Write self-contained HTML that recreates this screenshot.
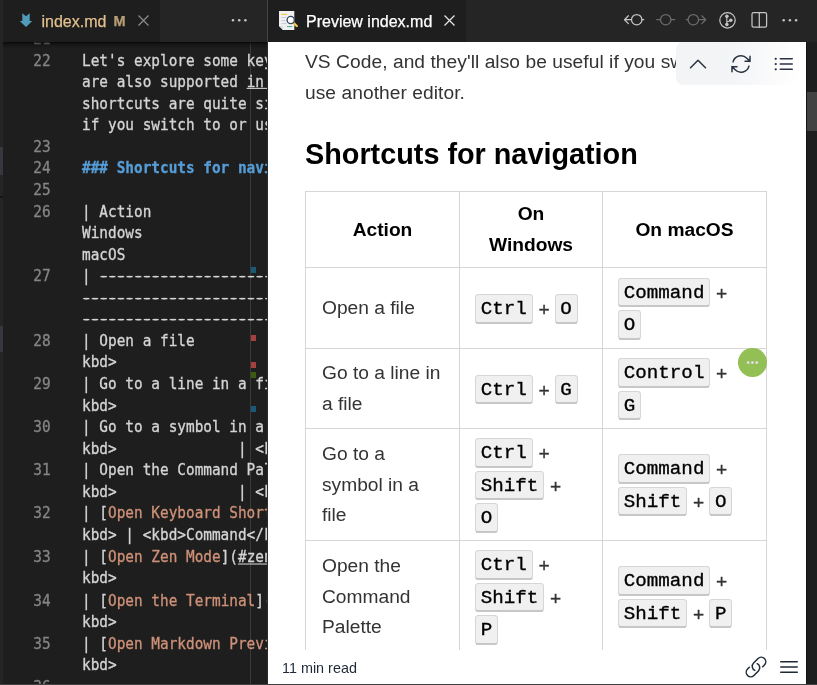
<!DOCTYPE html>
<html lang="en">
<head>
<meta charset="utf-8">
<title>index.md - Preview</title>
<style>
*{box-sizing:border-box;margin:0;padding:0}
html,body{width:817px;height:685px;overflow:hidden;background:#1e1e1e}
body{position:relative;font-family:"Liberation Sans",sans-serif;font-size:16px;color:#ccc}
.abs{position:absolute}
/* left strip */
#strip{left:0;top:0;width:3px;height:685px;background:#252526}
#strip i{position:absolute;left:0;width:3px;display:block}
/* tab bars */
.tabbar{top:0;height:42px;background:#252526}
.tab{position:absolute;top:0;height:42px;background:#1e1e1e}
.tab span{position:absolute;white-space:nowrap;line-height:42px;top:1px}
/* editor */
#editor{left:3px;top:42px;width:264px;height:642px;background:#1e1e1e;overflow:hidden;
 font-family:"DejaVu Sans Mono","Liberation Mono",monospace;font-size:14.4px;line-height:20.5714px;color:#d4d4d4}
#lines{position:absolute;left:0;top:-14.4px;width:400px;transform:scaleY(1.05);transform-origin:0 0}
.l{position:relative;height:20.5714px;white-space:pre}
.l b{position:absolute;left:0;width:47.6px;text-align:right;color:#858585;font-weight:normal}
.l s{position:absolute;left:79px;text-decoration:none}
.h{color:#569cd6;font-weight:bold}
.o{color:#ce9178}
.d{-webkit-text-stroke:0;text-shadow:1.3px 0 0 #d4d4d4,-1.3px 0 0 #d4d4d4}
.u{text-decoration:underline;text-underline-offset:1.2px;text-decoration-thickness:1px}
#shadow{left:0;top:0;width:264px;height:6px;background:linear-gradient(#000 0,rgba(0,0,0,.45) 30%,rgba(0,0,0,0) 100%);opacity:.75}
/* preview */
#pv{left:268px;top:42px;width:538px;height:642px;background:#fff;overflow:hidden;color:#333;
 font-size:19.2px;line-height:30.72px}
#md{position:absolute;left:37px;top:5.3px;width:480px}
#md p{margin:0 0 19.2px;white-space:nowrap;letter-spacing:.05px}
#md h3{font-size:28.8px;line-height:34.56px;margin:28.8px 0 19.2px;color:#000;font-weight:bold;white-space:nowrap}
table{border-collapse:collapse;border-spacing:0}
th,td{border:1px solid #d6d6d6;padding:0 15px;vertical-align:middle}
th{font-weight:bold;color:#000;text-align:center}
td.k{line-height:32.5px;white-space:nowrap}
td:first-child{padding:1px 15px 0 16px}
th{padding-top:1px}
kbd{font-family:"Liberation Mono",monospace;font-size:19.2px;line-height:1;color:#000;border:1px solid #d6d6d6;border-bottom:2px solid #c7c7c7;
 padding:3px 4.8px 1.5px;background:#f0f0f0;border-radius:3.6px;position:relative;top:.3px;-webkit-text-stroke:.35px}
td i{font-style:normal;position:relative;top:2.4px;left:.5px;-webkit-text-stroke:.3px}
#foot{left:0;top:608px;width:538px;height:34px;background:#fff}
#md,#lines,.tab,#foot{will-change:transform}
#lines{-webkit-text-stroke:.3px}
.tab span{-webkit-text-stroke:.25px}
</style>
</head>
<body>
<!-- left activity strip -->
<div id="strip" class="abs">
 <i style="top:147px;height:28px;background:#37373d"></i>
 <i style="top:196px;height:2px;background:#161616"></i>
 <i style="top:326px;height:26px;background:#37373d"></i>
</div>

<!-- left tab bar -->
<div class="abs tabbar" style="left:3px;width:264px">
 <div class="tab" style="left:0;width:157px">
  <svg class="abs" style="left:16px;top:12px" width="14" height="16" viewBox="0 0 14 16"><path d="M3.3 1.3 L7 4.2 L10.7 1.3 V9 H13.3 L7 15 L.7 9 H3.3 Z" fill="#519aba"/></svg>
  <span style="left:38.5px;color:#e2c08d">index.md</span>
  <span style="left:110.5px;top:-.5px;color:#b99f76;font-size:14.5px;font-weight:bold">M</span>
  <svg class="abs" style="left:134px;top:14px" width="13" height="13" viewBox="0 0 13 13"><path d="M1.5 1.5 L11.5 11.5 M11.5 1.5 L1.5 11.5" stroke="#8e8e8e" stroke-width="1.15" fill="none"/></svg>
 </div>
 <svg class="abs" style="left:227px;top:17px" width="18" height="6" viewBox="0 0 18 6"><circle cx="3" cy="3.3" r="1.25" fill="#c5c5c5"/><circle cx="9.2" cy="3.3" r="1.25" fill="#c5c5c5"/><circle cx="15.4" cy="3.3" r="1.25" fill="#c5c5c5"/></svg>
</div>

<!-- editor -->
<div id="editor" class="abs">
 <!-- overview ruler -->
 <div class="abs" style="left:247px;top:0;width:1px;height:642px;background:#3a3a3a"></div>
 <div class="abs" style="left:248px;top:225px;width:5px;height:6px;background:#1b5a77"></div>
 <div class="abs" style="left:248px;top:293px;width:5px;height:6px;background:#a64040"></div>
 <div class="abs" style="left:248px;top:320px;width:5px;height:6px;background:#a64040"></div>
 <div class="abs" style="left:248px;top:330px;width:5px;height:6px;background:#3d5c12"></div>
 <div class="abs" style="left:248px;top:364px;width:5px;height:6px;background:#1b5a77"></div>
 <div id="lines">
<div class="l"><b>21</b><s></s></div>
<div class="l"><b>22</b><s>Let's explore some keyboard</s></div>
<div class="l"><s>are also supported <span class="u">in VS</span></s></div>
<div class="l"><s>shortcuts are quite simple</s></div>
<div class="l"><s>if you switch to or use</s></div>
<div class="l"><b>23</b><s></s></div>
<div class="l"><b>24</b><s class="h">### Shortcuts for navigation</s></div>
<div class="l"><b>25</b><s></s></div>
<div class="l"><b>26</b><s>| Action</s></div>
<div class="l"><s>Windows</s></div>
<div class="l"><s>macOS</s></div>
<div class="l"><b>27</b><s>| <span class="d">----------------------</span></s></div>
<div class="l"><s class="d">------------------------</s></div>
<div class="l"><s class="d">------------------------</s></div>
<div class="l"><b>28</b><s>| Open a file</s></div>
<div class="l"><s>kbd&gt;</s></div>
<div class="l"><b>29</b><s>| Go to a line in a file</s></div>
<div class="l"><s>kbd&gt;</s></div>
<div class="l"><b>30</b><s>| Go to a symbol in a file</s></div>
<div class="l"><s>kbd&gt;              | &lt;kbd</s></div>
<div class="l"><b>31</b><s>| Open the Command Palette</s></div>
<div class="l"><s>kbd&gt;              | &lt;kbd</s></div>
<div class="l"><b>32</b><s>| [<span class="o">Open Keyboard Shortcuts</span></s></div>
<div class="l"><s>kbd&gt; | &lt;kbd&gt;Command&lt;/kbd</s></div>
<div class="l"><b>33</b><s>| [<span class="o">Open Zen Mode</span>](<span class="u">#zen-mode</span></s></div>
<div class="l"><s>kbd&gt;</s></div>
<div class="l"><b>34</b><s>| [<span class="o">Open the Terminal</span>](<span class="u">#t</span></s></div>
<div class="l"><s>kbd&gt;</s></div>
<div class="l"><b>35</b><s>| [<span class="o">Open Markdown Preview</span></s></div>
<div class="l"><s>kbd&gt;</s></div>
<div class="l"><b>36</b><s></s></div>
 </div>
 <div id="shadow" class="abs"></div>
</div>
<!-- group separator -->
<div class="abs" style="left:267px;top:0;width:1px;height:42px;background:#444"></div>
<div class="abs" style="left:267px;top:42px;width:1px;height:642px;background:#2b2b2b"></div>

<!-- right tab bar -->
<div class="abs tabbar" style="left:268px;width:549px">
 <div class="tab" style="left:0;width:198px">
  <svg class="abs" style="left:10px;top:10px" width="22" height="22" viewBox="0 0 22 22">
   <path d="M1 1 H16.3 V20 H5 L1 16 Z" fill="#f0f0f0"/>
   <path d="M1 16 H5 V20 Z" fill="#d5dde6"/>
   <rect x="3.2" y="3.8" width="6" height="1.1" fill="#f7c548"/>
   <rect x="3.4" y="7" width="5" height=".8" fill="#b9c7d6"/>
   <rect x="3.4" y="10" width="4" height=".8" fill="#b9c7d6"/>
   <rect x="3.4" y="13" width="5" height=".8" fill="#b9c7d6"/>
   <rect x="9" y="16" width="5.2" height="1.1" fill="#4db6a4"/>
   <path d="M15.4 12.8 L18.8 16" stroke="#f5c84c" stroke-width="2.4" stroke-linecap="round"/>
   <path d="M15 12.4 L16 13.4" stroke="#e8743b" stroke-width="1.8"/>
   <circle cx="12.7" cy="10" r="3.6" fill="#fff" stroke="#34495e" stroke-width="1.3"/>
  </svg>
  <span style="left:38px;color:#fff">Preview index.md</span>
  <svg class="abs" style="left:175px;top:14px" width="13" height="13" viewBox="0 0 13 13"><path d="M1.5 1.5 L11.5 11.5 M11.5 1.5 L1.5 11.5" stroke="#e4e4e4" stroke-width="1.25" fill="none"/></svg>
 </div>
 <!-- action icons -->
 <svg class="abs" style="left:350px;top:8px" width="190" height="26" viewBox="618 8 190 26" fill="none" stroke-linecap="round" stroke-linejoin="round">
  <g stroke="#c5c5c5" stroke-width="1.25">
   <circle cx="636.7" cy="19.7" r="5.2"/><path d="M631.5 19.7 H624.6 M628.4 15.8 L624.5 19.7 L628.4 23.6 M641.9 19.7 H643.7"/>
  </g>
  <g stroke="#6b6b6b" stroke-width="1.25">
   <circle cx="665.7" cy="19.7" r="5.2"/><path d="M656.8 19.7 H660.5 M670.9 19.7 H674.8"/>
   <circle cx="693.3" cy="19.7" r="5.2"/><path d="M698.5 19.7 H705.6 M701.8 15.8 L705.7 19.7 L701.8 23.6 M686.4 19.7 H688.1"/>
  </g>
  <g stroke="#c5c5c5" stroke-width="1.25">
   <circle cx="727.5" cy="20.3" r="7.7"/>
   <path d="M726.8 17 V23.6 M726.8 22.5 C726.8 20.3 730.6 22 730.6 20.3" stroke-width="1.1"/>
   <rect x="752" y="12.6" width="14.6" height="14.6" rx="1.6"/><path d="M759.3 12.6 V27.2"/>
  </g>
  <g fill="#c5c5c5" stroke="none">
   <circle cx="726.9" cy="16.2" r="1.75"/><circle cx="726.9" cy="24.5" r="1.75"/><circle cx="730.8" cy="20.3" r="1.75"/>
   <circle cx="783.7" cy="20.3" r="1.25"/><circle cx="789.9" cy="20.3" r="1.25"/><circle cx="796.1" cy="20.3" r="1.25"/>
  </g>
 </svg>
</div>

<!-- preview webview -->
<div id="pv" class="abs">
 <div id="md">
  <p>VS Code, and they'll also be useful if you switch to or<br>use another editor.</p>
  <h3>Shortcuts for navigation</h3>
  <table>
   <colgroup><col style="width:154px"><col style="width:143px"><col style="width:164px"></colgroup>
   <thead><tr style="height:76px"><th>Action</th><th>On<br>Windows</th><th>On macOS</th></tr></thead>
   <tbody>
    <tr style="height:81px"><td>Open a file</td><td class="k"><kbd>Ctrl</kbd> <i>+</i> <kbd>O</kbd></td><td class="k"><kbd>Command</kbd> <i>+</i><br><kbd>O</kbd></td></tr>
    <tr style="height:80px"><td>Go to a line in<br>a file</td><td class="k"><kbd>Ctrl</kbd> <i>+</i> <kbd>G</kbd></td><td class="k"><kbd>Control</kbd> <i>+</i><br><kbd>G</kbd></td></tr>
    <tr style="height:112px"><td>Go to a<br>symbol in a<br>file</td><td class="k"><kbd>Ctrl</kbd> <i>+</i><br><kbd>Shift</kbd> <i>+</i><br><kbd>O</kbd></td><td class="k"><kbd>Command</kbd> <i>+</i><br><kbd>Shift</kbd> <i>+</i> <kbd>O</kbd></td></tr>
    <tr style="height:112px"><td>Open the<br>Command<br>Palette</td><td class="k"><kbd>Ctrl</kbd> <i>+</i><br><kbd>Shift</kbd> <i>+</i><br><kbd>P</kbd></td><td class="k"><kbd>Command</kbd> <i>+</i><br><kbd>Shift</kbd> <i>+</i> <kbd>P</kbd></td></tr>
    <tr style="height:112px"><td>Open<br>Keyboard<br>Shortcuts</td><td class="k"><kbd>Ctrl</kbd> <i>+</i><br><kbd>K</kbd></td><td class="k"><kbd>Command</kbd> <i>+</i><br><kbd>K</kbd></td></tr>
   </tbody>
  </table>
 </div>
 <!-- floating green button -->
 <div class="abs" style="left:470.2px;top:306px;width:28.8px;height:28.8px;border-radius:50%;background:#93c054">
  <svg class="abs" style="left:0;top:0" width="29" height="29" viewBox="0 0 28.8 28.8"><circle cx="10.1" cy="14.5" r="1.35" fill="#e9dcf7"/><circle cx="14.3" cy="14.5" r="1.35" fill="#e9dcf7"/><circle cx="18.6" cy="14.5" r="1.35" fill="#e9dcf7"/></svg>
 </div>
 <!-- top toolbar -->
 <div class="abs" style="left:408.4px;top:0;width:130px;height:43px;border-radius:7px;background:linear-gradient(90deg,#f3f4f6 0,#f4f5f7 45%,#fff 96%)">
  <svg class="abs" style="left:9.6px;top:9.6px" width="24" height="24" viewBox="0 0 24 24" fill="none" stroke="#2a3342" stroke-width="1.5" stroke-linecap="round" stroke-linejoin="round"><path d="M4.5 15.75l7.5-7.5 7.5 7.5"/></svg>
  <svg class="abs" style="left:52.8px;top:9.6px" width="24" height="24" viewBox="0 0 24 24" fill="none" stroke="#2a3342" stroke-width="1.5" stroke-linecap="round" stroke-linejoin="round"><path d="M16.023 9.348h4.992v-.001M2.985 19.644v-4.992m0 0h4.992m-4.993 0l3.181 3.183a8.25 8.25 0 0013.803-3.7M4.031 9.865a8.25 8.25 0 0113.803-3.7l3.181 3.182m0-4.991v4.99"/></svg>
  <svg class="abs" style="left:96px;top:9.6px" width="24" height="24" viewBox="0 0 24 24" fill="none" stroke="#2a3342" stroke-width="1.5" stroke-linecap="round" stroke-linejoin="round"><path d="M8.25 6.75h12M8.25 12h12m-12 5.25h12M3.75 6.75h.007v.008H3.75V6.75zm.375 0a.375.375 0 11-.75 0 .375.375 0 01.75 0zM3.75 12h.007v.008H3.75V12zm.375 0a.375.375 0 11-.75 0 .375.375 0 01.75 0zm-.375 5.25h.007v.008H3.75v-.008zm.375 0a.375.375 0 11-.75 0 .375.375 0 01.75 0z"/></svg>
 </div>
 <!-- footer -->
 <div id="foot" class="abs">
  <span class="abs" style="left:14px;top:8px;font-size:14.4px;line-height:20px;color:#1f2937;white-space:nowrap">11 min read</span>
  <svg class="abs" style="left:476px;top:5px" width="24" height="24" viewBox="0 0 24 24" fill="none" stroke="#1f2937" stroke-width="1.5" stroke-linecap="round" stroke-linejoin="round"><path d="M13.19 8.688a4.5 4.5 0 011.242 7.244l-4.5 4.5a4.5 4.5 0 01-6.364-6.364l1.757-1.757m13.35-.622l1.757-1.757a4.5 4.5 0 00-6.364-6.364l-4.5 4.5a4.5 4.5 0 001.242 7.244"/></svg>
  <svg class="abs" style="left:509px;top:5px" width="24" height="24" viewBox="0 0 24 24" fill="none" stroke="#1f2937" stroke-width="1.5" stroke-linecap="round" stroke-linejoin="round"><path d="M3.75 6.75h16.5M3.75 12h16.5m-16.5 5.25h16.5"/></svg>
 </div>
</div>

<!-- preview scrollbar -->
<div class="abs" style="left:806px;top:42px;width:11px;height:642px;background:#1e1e1e"></div>
<div class="abs" style="left:806px;top:42px;width:1px;height:642px;background:#141414"></div>
<div class="abs" style="left:807px;top:92px;width:10px;height:39px;background:#424242"></div>

<!-- bottom border -->
<div class="abs" style="left:0;top:684px;width:817px;height:1px;background:#414141"></div>
</body>
</html>
